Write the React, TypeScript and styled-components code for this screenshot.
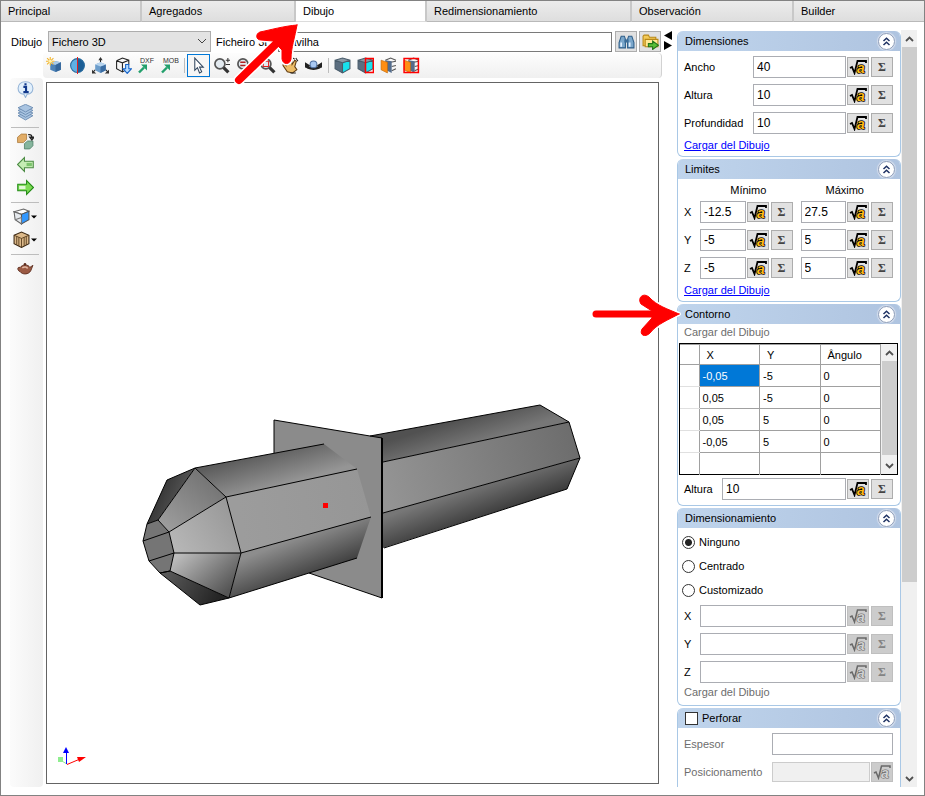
import React from "react";
import styled, { createGlobalStyle, css } from "styled-components";

const GlobalStyle = createGlobalStyle`
  * { box-sizing: border-box; }
  html, body, #root { height: 100%; margin: 0; }
  body { background: #fff; color: #000; }
  body, button, input, select { font-family: "Liberation Sans", Arial, sans-serif; font-size: 11px; }
  svg { display: block; }
`;

/* ---------- frame ---------- */

const Window = styled.div`
  position: relative;
  display: flex;
  flex-direction: column;
  height: 100vh;
  border: 1px solid #828282;
  background: #fff;
  overflow: hidden;
`;

const TabBar = styled.nav`
  display: grid;
  grid-template-columns: 141px 154px 131px 205px 162px 1fr;
  height: 21px;
  flex: none;
`;

const Tab = styled.button<{ $active?: boolean }>`
  padding: 0 7px;
  border: 0;
  border-right: 2px solid #c8c8c8;
  border-bottom: 1px solid ${(p) => (p.$active ? "#dcdcdc" : "#b9b9b9")};
  background: ${(p) => (p.$active ? "#fff" : "linear-gradient(#ececec, #dedede)")};
  color: #000;
  text-align: left;
  &:last-child { border-right: 0; }
`;

const Main = styled.main`
  display: grid;
  grid-template-columns: minmax(0, 1fr) 14px 241px;
  flex: 1;
  min-height: 0;
  padding: 8px 7px 8px 0;
`;

const Work = styled.section`
  display: flex;
  flex-direction: column;
  min-width: 0;
`;

/* ---------- drawing picker ---------- */

const PickerRow = styled.div`
  display: flex;
  align-items: center;
  height: 23px;
  flex: none;
  padding-left: 10px;
`;

const PickerLabel = styled.label`
  width: 37px;
`;

const SelectWrap = styled.span`
  position: relative;
  width: 163px;
  margin-right: 5px;
`;

const Select = styled.select`
  appearance: none;
  width: 100%;
  height: 21px;
  padding: 0 20px 0 3px;
  border: 1px solid #adadad;
  border-radius: 0;
  background: #e3e3e3;
  color: #000;
`;

const SelectArrow = styled.svg`
  position: absolute;
  right: 4px;
  top: 7px;
  pointer-events: none;
`;

const FileInput = styled.input`
  flex: 1;
  min-width: 0;
  height: 20px;
  margin: 0 3px 0 6px;
  padding: 0 3px;
  border: 1px solid #7a7a7a;
`;

const FileButton = styled.button`
  display: grid;
  place-items: center;
  width: 22px;
  height: 21px;
  margin-right: 1px;
  padding: 0;
  border: 1px solid #adadad;
  background: #e1e1e1;
  & + & { margin-left: 1px; }
`;

/* ---------- tool bars ---------- */

const Toolbar = styled.div`
  display: flex;
  align-items: center;
  height: 25px;
  flex: none;
  margin-left: 42px;
  border-radius: 4px;
  border-right: 1px solid #d2d2d2;
  background: linear-gradient(#fdfdfd, #f0f0f0);
`;

const ToolButton = styled.button<{ $active?: boolean }>`
  display: grid;
  place-items: center;
  width: 23px;
  height: 23px;
  padding: 0;
  border: 1px solid ${(p) => (p.$active ? "#0078d7" : "transparent")};
  background: ${(p) => (p.$active ? "#f6f6f6" : "transparent")};
`;

const Separator = styled.span<{ $vertical?: boolean }>`
  flex: none;
  ${(p) =>
    p.$vertical
      ? css`width: 1px; height: 15px; margin: 0 2px 0 3px; background: #bdbdbd;`
      : css`width: 28px; height: 1px; margin: 3px 0 2px; background: #bdbdbd;`}
`;

const Stage = styled.div`
  display: flex;
  flex: 1;
  min-height: 0;
`;

const Rail = styled.div`
  display: flex;
  flex-direction: column;
  align-items: center;
  width: 33px;
  margin-left: 9px;
  padding-right: 3px;
  border-radius: 4px;
  background: linear-gradient(90deg, #fbfbfb, #f0f0f0);
`;

const RailButton = styled(ToolButton)<{ $menu?: boolean }>`
  flex: none;
  ${(p) =>
    p.$menu &&
    css`
      display: flex;
      align-items: center;
      justify-content: center;
      width: 30px;
      gap: 1px;
    `}
`;

const Viewport = styled.div`
  flex: 1;
  min-width: 0;
  margin: 4px 3px 3px;
  border: 1px solid #646464;
  background: #fff;
  svg { width: 100%; height: 100%; }
`;

const Collapsers = styled.div`
  display: flex;
  flex-direction: column;
  align-items: center;
  gap: 1px;
  padding: 1px 1px 0 0;
`;

const CollapseButton = styled.button`
  width: 9px;
  height: 9px;
  padding: 0;
  border: 0;
  background: none;
`;

/* ---------- property panels ---------- */

const Side = styled.aside`
  display: flex;
  min-height: 0;
`;

const Panels = styled.div`
  flex: 1;
  min-width: 0;
  padding: 1px 0 0 1px;
  overflow: hidden;
`;

const Panel = styled.section`
  margin-bottom: 2px;
  border: 1px solid #a9c8e6;
  border-top: 0;
  border-radius: 6px;
  overflow: hidden;
`;

const PanelHead = styled.header`
  display: flex;
  align-items: center;
  justify-content: space-between;
  height: 20px;
  padding: 0 5px 0 7px;
  background: linear-gradient(90deg, #bfd4ec, #afc4e0);
`;

const PanelTitle = styled.h2`
  margin: 0;
  font-size: 11px;
  font-weight: 400;
`;

const RoundButton = styled.button`
  display: grid;
  place-items: center;
  width: 17px;
  height: 17px;
  padding: 0;
  border: 1px solid #8c9cb8;
  border-radius: 50%;
  background: #fff;
  box-shadow: 0 0 1px 1px #d8e0ee;
`;

const PanelBody = styled.div`
  display: flex;
  flex-direction: column;
  gap: 6px;
  padding: 5px 7px 5px 6px;
`;

const FieldRow = styled.div`
  display: flex;
  align-items: center;
  height: 22px;
`;

const FieldLabel = styled.label<{ $w: number; $dim?: boolean }>`
  flex: none;
  width: ${(p) => p.$w}px;
  color: ${(p) => (p.$dim ? "#6d6d6d" : "#000")};
`;

const FieldInput = styled.input`
  flex: 1;
  min-width: 0;
  width: 0;
  height: 22px;
  padding: 0 3px;
  border: 1px solid #abadb3;
  background: #fff;
  color: #000;
  font-size: 12px;
  &:disabled { height: 20px; border-color: #cccccc; background: #f0f0f0; }
`;

const MiniButton = styled.button`
  display: grid;
  place-items: center;
  flex: none;
  width: 22px;
  height: 20px;
  margin-left: 1px;
  padding: 0;
  border: 1px solid #adadad;
  background: #e1e1e1;
  color: #444;
  font: bold 12px "Liberation Serif", serif;
  & + & { margin-left: 2px; }
  &:disabled { border-color: #bfbfbf; background: #cccccc; color: #838383; }
`;

const PairGap = styled.span`
  flex: none;
  width: 8px;
`;

const AxisHeads = styled.div`
  display: grid;
  grid-template-columns: 1fr 1fr;
  padding-left: 16px;
  height: 11px;
  line-height: 13px;
  text-align: center;
`;

const linkStyle = css`
  align-self: flex-start;
  height: 12px;
  margin-top: -1px;
  line-height: 12px;
`;

const Link = styled.a`
  ${linkStyle}
  color: #0000ff;
`;

const LinkButton = styled.button`
  ${linkStyle}
  margin-top: -3px;
  margin-bottom: -1px;
  padding: 0;
  border: 0;
  background: none;
  &:last-child { margin-bottom: 2px; }
  &:disabled { color: #6d6d6d; }
`;

const Option = styled.label`
  display: flex;
  align-items: center;
  gap: 4px;
  height: 18px;
`;

const Radio = styled.input`
  appearance: none;
  width: 13px;
  height: 13px;
  margin: 0 0 0 -2px;
  border: 1px solid #333;
  border-radius: 50%;
  background: #fff;
  &:checked { background: radial-gradient(circle, #222 0 3px, #fff 4px); }
`;

const Check = styled.input`
  appearance: none;
  width: 13px;
  height: 13px;
  margin: 0;
  border: 1px solid #333;
  background: #fff;
`;

const CheckTitle = styled.label`
  display: flex;
  align-items: center;
  gap: 4px;
`;

const GridFrame = styled.div`
  display: flex;
  height: 132px;
  margin: 0 -5px -3px;
  border: 1px solid #000;
`;

const Grid = styled.table`
  flex: 1;
  width: 100%;
  table-layout: fixed;
  border-collapse: collapse;
  border-top: 1px solid #a0a0a0;
  th, td {
    height: 22px;
    padding: 0 3px;
    border: 1px solid #a0a0a0;
    border-top: 0;
    text-align: left;
    font-weight: 400;
    font-size: 11px;
  }
  thead th { height: 20px; padding-left: 7px; }
  th:first-child { width: 19px; border-left: 0; }
  tbody th { border-bottom-color: #e0e0e0; }
  tbody tr:last-child > * { border-bottom: 0; }
`;

const Cell = styled.td<{ $selected?: boolean }>`
  ${(p) => p.$selected && css`background: #0078d7; color: #fff;`}
`;

/* ---------- scroll bars ---------- */

const ScrollTrack = styled.div`
  display: flex;
  flex-direction: column;
  flex: none;
  width: 16px;
  background: #f0f0f0;
`;

const ScrollButton = styled.button`
  display: grid;
  place-items: center;
  flex: none;
  height: 17px;
  width: 16px;
  padding: 0;
  border: 0;
  background: #f0f0f0;
`;

const ScrollArea = styled.div`
  flex: 1;
`;

const Thumb = styled.div<{ $size: string }>`
  height: ${(p) => p.$size};
  margin-left: 1px;
  background: #cdcdcd;
`;

const Annotations = styled.svg`
  position: absolute;
  left: 0;
  top: 0;
  pointer-events: none;
`;

/* ---------- icons ---------- */

const Chevron = ({ down }: { down?: boolean }) => (
  <svg width="9" height="6" viewBox="0 0 9 6">
    <path d={down ? "M1 1L4.5 4.5L8 1" : "M1 5L4.5 1.5L8 5"} fill="none" stroke="#505050" strokeWidth="1.8" />
  </svg>
);

const DoubleChevron = () => (
  <svg width="9" height="9" viewBox="0 0 9 9">
    <path d="M1.5 4L4.5 1.2L7.5 4M1.5 8L4.5 5.2L7.5 8" fill="none" stroke="#1f3263" strokeWidth="1.5" />
  </svg>
);

const FormulaIcon = ({ off }: { off?: boolean }) => (
  <svg width="18" height="16" viewBox="0 0 18 16">
    <path d="M1 9L3 8L5.5 14L8.5 2H17V4" fill="none" stroke={off ? "#686868" : "#000"} strokeWidth={off ? 1.5 : 1.8} />
    <text x="8" y="14" fontFamily="Liberation Sans" fontSize="14" fontWeight="700" fontStyle="italic"
      fill={off ? "#d0d0d0" : "#ffb914"} stroke={off ? "#686868" : "#000"} strokeWidth={off ? 1.2 : 1.6}
      strokeLinejoin="round" paintOrder="stroke">a</text>
  </svg>
);

const I = ({ children }: { children: React.ReactNode }) => (
  <svg width="17" height="17" viewBox="0 0 16 16">{children}</svg>
);

const BoxNewIcon = () => (
  <I>
    <path d="M4 6L9 4L14 5V12L9 14L4 12Z" fill="#4e83b8" />
    <path d="M4 6L9 4L14 5L9 7.5Z" fill="#a9cbea" />
    <path d="M9 7.5L14 5V12L9 14Z" fill="#34669b" />
    <path d="M4 0V8M0 4H8M1 1L7 7M7 1L1 7" stroke="#f2b42a" />
    <circle cx="4" cy="4" r="1.5" fill="#fff3b0" />
  </I>
);
const SphereIcon = () => (
  <I>
    <circle cx="8" cy="8" r="6.5" fill="#5fb0e4" />
    <path d="M8 1.5A6.5 6.5 0 0 1 8 14.5Z" fill="#1b5e96" />
    <circle cx="8" cy="8" r="6.5" fill="none" stroke="#2a6b9d" />
    <path d="M8 0V16" stroke="#e02020" />
  </I>
);
const AxesBoxIcon = () => (
  <I>
    <path d="M8 5V1M3 12L0.5 15M13 12L15.5 15" stroke="#222" />
    <path d="M6 3L8 0L10 3ZM0 12V15.5H4ZM16 12V15.5H12Z" fill="#333" />
    <path d="M3 7L8 5L13 7V12.5L8 15L3 12.5Z" fill="#6c9dcb" />
    <path d="M8 9L13 7V12.5L8 15Z" fill="#3a6da3" />
    <path d="M3 7L8 5L13 7L8 9Z" fill="#b7d4ee" />
  </I>
);
const ImportBoxIcon = () => (
  <I>
    <path d="M1.5 3.5L7 1L13 3V7M1.5 3.5L7 5.5L13 3M1.5 3.5V11L7 14V5.5M7 14L9 13" fill="none" stroke="#222" />
    <path d="M10 7H13V11H15.5L11.5 15.5L7.5 11H10Z" fill="#b7dcff" stroke="#1764c8" />
  </I>
);
const TagArrowIcon = ({ tag }: { tag: string }) => (
  <svg width="19" height="17" viewBox="0 0 19 17">
    <path d="M2 15.5L7 10.5" fill="none" stroke="#23a06c" strokeWidth="2.4" />
    <path d="M4 7.5H10V13.5Z" fill="#23a06c" />
    <text x="3" y="6" fontFamily="Liberation Sans" fontSize="7" fill="#333">{tag}</text>
  </svg>
);
const CursorIcon = () => (
  <I><path d="M4.5 1V12.5L7 10L9 15L11 14L9 9.5H12.5Z" fill="#fff" stroke="#33475f" /></I>
);
const ZoomIcon = ({ kind }: { kind: "pm" | "fit" | "sel" }) => (
  <I>
    <circle cx="6.5" cy="6.5" r="4.7" fill="#e3eaf0" stroke="#555" strokeWidth="1.6" />
    <path d="M10 10L14.5 14.5" stroke="#333" strokeWidth="3" />
    {kind === "pm" && <path d="M12 3H16M14 1V5M12 7H16" stroke="#333" />}
    {kind === "fit" && <path d="M4 5H9M4 8H9" stroke="#b02020" strokeWidth="1.4" />}
    {kind === "sel" && <path d="M4 4H9V9H4Z" fill="none" stroke="#e02020" />}
  </I>
);
const HandIcon = () => (
  <I>
    <path d="M1 6L4 8L3 3L5 3L7 7L7 2L9 2L9.5 7L12 3L13.5 4L12 9L14 12L10 15L5 14L1 8Z" fill="#edbd68" stroke="#5f3b11" />
    <path d="M10 1L12 2M13 1L15 4M8 15H13" stroke="#222" />
  </I>
);
const OrbitIcon = () => (
  <I>
    <path d="M1 7C1 12 15 12 15 7" fill="none" stroke="#222" strokeWidth="3" />
    <circle cx="8" cy="7" r="3.2" fill="#a8c8f2" stroke="#4e6f9f" />
    <path d="M0 5V10L5 8ZM16 5V10L11 8Z" fill="#222" />
  </I>
);
const CubeIcon = ({ marked }: { marked?: boolean }) => (
  <I>
    <path d="M1 3L8 1L15 3L8 5.5Z" fill="#8c9aa6" />
    <path d="M1 3L8 5.5V15L1 11Z" fill="#5b6e80" />
    <path d="M8 5.5L15 3V11L8 15Z" fill="#17e1ed" />
    <path d="M1 3L8 1L15 3V11L8 15L1 11ZM1 3L8 5.5L15 3M8 5.5V15" fill="none" stroke="#495c6b" />
    {marked && <path d="M8 1.5H15.5V14.5H8Z" fill="none" stroke="#f00" strokeWidth="1.4" />}
  </I>
);
const CutCubeIcon = ({ marked }: { marked?: boolean }) => (
  <I>
    <path d="M5 3L10 1L15 3M10 5L15 4M11 9L15 8M11 13L15 11" fill="none" stroke="#555" />
    <path d="M5 3L11 4V15L5 12Z" fill="#536c8c" />
    <path d="M1 3L7 5V15L1 12Z" fill="#ff8e12" stroke="#c06a0a" strokeWidth="0.6" />
    {marked && <path d="M1 1.5H14.5V14.5H1Z" fill="none" stroke="#f00" strokeWidth="1.4" />}
  </I>
);
const BinocularsIcon = () => (
  <I>
    <path d="M3 3H6L7 6V14H1V9ZM10 3H13L15 9V14H9V6Z" fill="#7ba7cb" stroke="#2f5f8a" />
    <path d="M6 6H10V9H6Z" fill="#3c6d98" />
    <path d="M3 9V13M11 9V13" stroke="#e3f1ff" strokeWidth="1.6" />
  </I>
);
const FolderIcon = () => (
  <I>
    <path d="M1 3V12H13V4H7L6 2H2Z" fill="#f4ca57" stroke="#b98816" />
    <path d="M3 6H15V13H3Z" fill="#ffe995" stroke="#b98816" />
    <path d="M6 10H10V7.5L15.5 11.5L10 15.5V13H6Z" fill="#58bf37" stroke="#23751a" />
  </I>
);
const InfoIcon = () => (
  <I>
    <path d="M8 0.7C17 0.7 17 12.5 9.5 12.5L8 15.5L6.5 12.5C-1 12.5-1 0.7 8 0.7Z" fill="#e2f0fc" stroke="#94b3d6" />
    <path d="M8 2V4M6 5.5H8.5V10M6 10.5H11" fill="none" stroke="#12398c" strokeWidth="2" />
  </I>
);
const LayersIcon = () => (
  <I>
    {[11, 8.5, 6, 3.5].map((y) => (
      <path key={y} d={`M1 ${y}L8 ${y - 3.2}L15 ${y}L8 ${y + 4}Z`} fill="#a9c4e1" stroke="#6587ad" strokeWidth="0.8" />
    ))}
  </I>
);
const SwapIcon = () => (
  <I>
    <path d="M0.5 4L4 1H9V6L6 9H0.5Z" fill="#e2ad67" stroke="#a97535" strokeWidth="0.7" />
    <path d="M7 10L10 7.5H15V12L12 15H7Z" fill="#86b59d" stroke="#497b62" strokeWidth="0.7" />
    <path d="M10.5 1.5C14 1 14 3 14 5M12 4H16L14 6.5Z" fill="none" stroke="#222" strokeWidth="1.2" />
  </I>
);
const GreenArrow = ({ right }: { right?: boolean }) => (
  <I>
    <path
      d={right ? "M0.7 5H9V1.5L15.5 8L9 14.5V11H0.7Z" : "M15.3 5H7V1.5L0.5 8L7 14.5V11H15.3Z"}
      fill={right ? "#7ddb55" : "#c5edb4"} stroke={right ? "#238b16" : "#4a8b42"}
    />
    <path d={right ? "M2 6.5H8V9.5H2Z" : "M9 6.5H14V9.5H9Z"} fill={right ? "#e2f7d8" : "#7bc36b"} />
  </I>
);
const ViewCubeIcon = () => (
  <I>
    <path d="M1 3.5L10 1L15 3L8 6Z" fill="#fff" stroke="#666" />
    <path d="M1 3.5L8 6V15L2 11Z" fill="#e5e9ed" stroke="#666" />
    <path d="M8 6L15 3V11L8 15Z" fill="#3298ff" stroke="#555" />
    <path d="M2 11L8 9L8 15" fill="none" stroke="#777" />
  </I>
);
const CrateIcon = () => (
  <I>
    <path d="M1 4L8 1L15 4V12L8 15.5L1 12Z" fill="#dcb98a" stroke="#3b2813" />
    <path d="M1 4L8 7L15 4M8 7V15M3.5 5V13M5.5 6V14M10.5 6V14M12.5 5V13" fill="none" stroke="#513719" strokeWidth="0.8" />
  </I>
);
const TeapotIcon = () => (
  <I>
    <path d="M3 7C5 4 11 4 12 7L15 5L13 10C11 14 5 14 3 11C0 10 0 6 3 7Z" fill="#9b5a43" stroke="#5b2c1d" strokeWidth="0.8" />
    <circle cx="7.5" cy="4" r="1.2" fill="#5b2c1d" />
    <path d="M5 7.5C7 6 9 6.5 10 8" fill="none" stroke="#e3b9a5" strokeWidth="1.5" />
  </I>
);
const MenuCaret = () => (
  <svg width="6" height="4" viewBox="0 0 6 4"><path d="M0 0.5H6L3 3.5Z" fill="#000" /></svg>
);

/* ---------- model drawing ---------- */

const stops: Record<string, [number, number, number, number, string[]]> = {
  frontTop: [255, 455, 265, 490, ["#5d5d5d", "#959595"]],
  frontMid: [240, 520, 370, 500, ["#9c9c9c", "#969696"]],
  frontLow: [290, 540, 305, 578, ["#8d8d8d", "#414141"]],
  backTop: [460, 419, 468, 445, ["#515151", "#777777"]],
  backMid: [384, 490, 580, 440, ["#949494", "#6c6c6c"]],
  backLow: [460, 490, 472, 523, ["#777777", "#3b3b3b"]],
  noseA: [150, 500, 185, 515, ["#303030", "#606060"]],
  noseB: [165, 530, 205, 480, ["#9e9e9e", "#777777"]],
  noseC: [172, 550, 235, 510, ["#b8b8b8", "#989898"]],
  noseD: [180, 553, 220, 598, ["#bdbdbd", "#555555"]],
  noseE: [165, 573, 215, 602, ["#5a5a5a", "#252525"]],
};

const faces: [string, string][] = [
  ["backTop", "370,436 540,405 569,422 383,462"],
  ["backMid", "383,462 569,422 580,458 383,513"],
  ["backLow", "383,513 580,458 567,489 383,548"],
  ["plate", "274,420 382,438 382,598 274,561"],
  ["noseA", "147,524 158,520 195,468 167,480"],
  ["noseB", "158,520 169,532 226,497 195,468"],
  ["noseC", "169,532 174,553 241,553 226,497"],
  ["noseD", "174,553 170,571 229,598 241,553"],
  ["noseE", "170,571 160,573 200,605 229,598"],
  ["frontTop", "195,468 324,444 357,469 226,497"],
  ["frontMid", "226,497 357,469 371,517 241,553"],
  ["frontLow", "241,553 371,517 357,558 229,598"],
];

const edges =
  "M370 436L540 405L569 422L580 458L567 489L384 548M383 462L569 422M383 513L580 458" +
  "M274 453V420L382 438M382 598L309 573" +
  "M195 468L324 444M226 497L357 469M241 553L371 517M229 598L357 558" +
  "M147 524L167 480L195 468L226 497L241 553L229 598L200 605L160 573" +
  "M158 520L195 468M169 532L226 497M174 553H241M170 571L229 598" +
  "M147 524L158 520L169 532L174 553L170 571L160 573L149 561L143 541ZM143 541L169 532M149 561L174 553M160 573L170 571";

const Model = () => (
  <svg viewBox="47 83 611 700" role="img" aria-label="Cavilha">
    <defs>
      {Object.entries(stops).map(([id, [x1, y1, x2, y2, colors]]) => (
        <linearGradient key={id} id={id} gradientUnits="userSpaceOnUse" x1={x1} y1={y1} x2={x2} y2={y2}>
          <stop offset="0" stopColor={colors[0]} />
          <stop offset="1" stopColor={colors[1]} />
        </linearGradient>
      ))}
    </defs>
    {faces.map(([id, points]) => (
      <polygon key={id} points={points} fill={id === "plate" ? "#8b8b8b" : `url(#${id})`} />
    ))}
    <polygon points="147,524 158,520 169,532 174,553 170,571 160,573 149,561 143,541" fill="#757575" />
    <path d={edges} fill="none" stroke="#000" />
    <path d="M382 438V598" stroke="#000" strokeWidth="2" />
    <rect x="323" y="503" width="5" height="5" fill="#f00" />
    <path d="M67 764L60 760" stroke="#8fee8f" />
    <rect x="58" y="757" width="5" height="5" fill="#8fee8f" />
    <path d="M66.5 764V750" stroke="#00f" />
    <path d="M63 753L66 747L69 753Z" fill="#00f" />
    <path d="M67 764.5L80 759" stroke="#f00" />
    <path d="M77 757H86L79 762Z" fill="#f00" />
  </svg>
);

/* ---------- composed parts ---------- */

type FieldProps = { id: string; name: string; value?: string; off?: boolean };

const Field = ({ id, name, value = "", off }: FieldProps) => (
  <>
    <FieldInput id={id} aria-label={name} defaultValue={value} />
    <MiniButton aria-label={`Fórmula ${name}`} disabled={off}><FormulaIcon off={off} /></MiniButton>
    <MiniButton aria-label={`Suma ${name}`} disabled={off}>Σ</MiniButton>
  </>
);

const Group = ({ title, children }: { title: React.ReactNode; children: React.ReactNode }) => (
  <Panel>
    <PanelHead>
      <PanelTitle>{title}</PanelTitle>
      <RoundButton aria-label="Contraer"><DoubleChevron /></RoundButton>
    </PanelHead>
    <PanelBody>{children}</PanelBody>
  </Panel>
);

const Scrollbar = ({ size }: { size: string }) => (
  <ScrollTrack>
    <ScrollButton aria-label="Subir"><Chevron /></ScrollButton>
    <ScrollArea><Thumb $size={size} /></ScrollArea>
    <ScrollButton aria-label="Bajar"><Chevron down /></ScrollButton>
  </ScrollTrack>
);

const tabs = ["Principal", "Agregados", "Dibujo", "Redimensionamiento", "Observación", "Builder"];
const dimensions = [["Ancho", "40"], ["Altura", "10"], ["Profundidad", "10"]];
const limits = [["X", "-12.5", "27.5"], ["Y", "-5", "5"], ["Z", "-5", "5"]];
const contour = [["-0,05", "-5", "0"], ["0,05", "-5", "0"], ["0,05", "5", "0"], ["-0,05", "5", "0"], ["", "", ""]];

const upperHead =
  "M297 25C284 26 270 30 260 32C255 34 256 40 261 40L273 41L282 50V59C283 65 290 65 291 59C291 48 295 37 297 25Z";
const sideHead =
  "M679 314C668 309 657 306 649 297C643 292 637 298 641 304L652 311V318L642 329C639 335 645 338 650 333C657 324 668 320 679 314Z";

export default function App() {
  return (
    <Window>
      <GlobalStyle />
      <TabBar>
        {tabs.map((t) => <Tab key={t} $active={t === "Dibujo"}>{t}</Tab>)}
      </TabBar>
      <Main>
        <Work>
          <PickerRow>
            <PickerLabel htmlFor="kind">Dibujo</PickerLabel>
            <SelectWrap>
              <Select id="kind"><option>Fichero 3D</option></Select>
              <SelectArrow width="10" height="7" viewBox="0 0 10 7">
                <path d="M1 1L5 5L9 1" fill="none" stroke="#444" />
              </SelectArrow>
            </SelectWrap>
            <label htmlFor="file">Ficheiro 3D</label>
            <FileInput id="file" defaultValue="Cavilha" />
            <FileButton aria-label="Buscar"><BinocularsIcon /></FileButton>
            <FileButton aria-label="Abrir"><FolderIcon /></FileButton>
          </PickerRow>
          <Toolbar>
            <ToolButton aria-label="Nueva caja"><BoxNewIcon /></ToolButton>
            <ToolButton aria-label="Esfera"><SphereIcon /></ToolButton>
            <ToolButton aria-label="Ejes"><AxesBoxIcon /></ToolButton>
            <ToolButton aria-label="Importar"><ImportBoxIcon /></ToolButton>
            <ToolButton aria-label="Exportar DXF"><TagArrowIcon tag="DXF" /></ToolButton>
            <ToolButton aria-label="Exportar MOB"><TagArrowIcon tag="MOB" /></ToolButton>
            <Separator $vertical />
            <ToolButton aria-label="Seleccionar" $active><CursorIcon /></ToolButton>
            <ToolButton aria-label="Zoom"><ZoomIcon kind="pm" /></ToolButton>
            <ToolButton aria-label="Zoom total"><ZoomIcon kind="fit" /></ToolButton>
            <ToolButton aria-label="Zoom ventana"><ZoomIcon kind="sel" /></ToolButton>
            <ToolButton aria-label="Mover"><HandIcon /></ToolButton>
            <ToolButton aria-label="Orbitar"><OrbitIcon /></ToolButton>
            <Separator $vertical />
            <ToolButton aria-label="Cubo"><CubeIcon /></ToolButton>
            <ToolButton aria-label="Cara"><CubeIcon marked /></ToolButton>
            <ToolButton aria-label="Corte"><CutCubeIcon /></ToolButton>
            <ToolButton aria-label="Corte marcado"><CutCubeIcon marked /></ToolButton>
          </Toolbar>
          <Stage>
            <Rail>
              <RailButton aria-label="Información"><InfoIcon /></RailButton>
              <RailButton aria-label="Capas"><LayersIcon /></RailButton>
              <Separator />
              <RailButton aria-label="Cambiar"><SwapIcon /></RailButton>
              <RailButton aria-label="Anterior"><GreenArrow /></RailButton>
              <RailButton aria-label="Siguiente"><GreenArrow right /></RailButton>
              <Separator />
              <RailButton aria-label="Vista" $menu><ViewCubeIcon /><MenuCaret /></RailButton>
              <RailButton aria-label="Material" $menu><CrateIcon /><MenuCaret /></RailButton>
              <Separator />
              <RailButton aria-label="Render"><TeapotIcon /></RailButton>
            </Rail>
            <Viewport><Model /></Viewport>
          </Stage>
        </Work>

        <Collapsers>
          <CollapseButton aria-label="Expandir">
            <svg width="9" height="9"><path d="M8 0V9L0 4.5Z" /></svg>
          </CollapseButton>
          <CollapseButton aria-label="Ocultar">
            <svg width="9" height="9"><path d="M0 0V9L8 4.5Z" /></svg>
          </CollapseButton>
        </Collapsers>

        <Side>
          <Panels>
            <Group title="Dimensiones">
              {dimensions.map(([name, value]) => (
                <FieldRow key={name}>
                  <FieldLabel $w={69} htmlFor={`dim-${name}`}>{name}</FieldLabel>
                  <Field id={`dim-${name}`} name={name} value={value} />
                </FieldRow>
              ))}
              <Link href="#">Cargar del Dibujo</Link>
            </Group>

            <Group title="Limites">
              <AxisHeads><span>Mínimo</span><span>Máximo</span></AxisHeads>
              {limits.map(([axis, min, max]) => (
                <FieldRow key={axis}>
                  <FieldLabel $w={16} htmlFor={`min-${axis}`}>{axis}</FieldLabel>
                  <Field id={`min-${axis}`} name={`${axis} mínimo`} value={min} />
                  <PairGap />
                  <Field id={`max-${axis}`} name={`${axis} máximo`} value={max} />
                </FieldRow>
              ))}
              <Link href="#">Cargar del Dibujo</Link>
            </Group>

            <Group title="Contorno">
              <LinkButton disabled>Cargar del Dibujo</LinkButton>
              <GridFrame>
                <Grid>
                  <thead>
                    <tr><th /><th>X</th><th>Y</th><th>Ângulo</th></tr>
                  </thead>
                  <tbody>
                    {contour.map((row, r) => (
                      <tr key={r}>
                        <th />
                        {row.map((v, c) => <Cell key={c} $selected={r === 0 && c === 0}>{v}</Cell>)}
                      </tr>
                    ))}
                  </tbody>
                </Grid>
                <Scrollbar size="98%" />
              </GridFrame>
              <FieldRow>
                <FieldLabel $w={38} htmlFor="contour-height">Altura</FieldLabel>
                <Field id="contour-height" name="Altura" value="10" />
              </FieldRow>
            </Group>

            <Group title="Dimensionamiento">
              {["Ninguno", "Centrado", "Customizado"].map((o) => (
                <Option key={o}>
                  <Radio type="radio" name="sizing" defaultChecked={o === "Ninguno"} />
                  {o}
                </Option>
              ))}
              {["X", "Y", "Z"].map((axis) => (
                <FieldRow key={axis}>
                  <FieldLabel $w={16} htmlFor={`size-${axis}`}>{axis}</FieldLabel>
                  <Field id={`size-${axis}`} name={axis} off />
                </FieldRow>
              ))}
              <LinkButton disabled>Cargar del Dibujo</LinkButton>
            </Group>

            <Group title={<CheckTitle><Check type="checkbox" />Perforar</CheckTitle>}>
              <FieldRow>
                <FieldLabel $w={88} $dim htmlFor="thickness">Espesor</FieldLabel>
                <FieldInput id="thickness" />
              </FieldRow>
              <FieldRow>
                <FieldLabel $w={88} $dim htmlFor="position">Posicionamento</FieldLabel>
                <FieldInput id="position" disabled />
                <MiniButton aria-label="Fórmula" disabled><FormulaIcon off /></MiniButton>
              </FieldRow>
              <FieldRow />
            </Group>
          </Panels>
          <Scrollbar size="74%" />
        </Side>
      </Main>
      <Annotations width="700" height="340" viewBox="1 1 700 340">
        <g fill="none" stroke="#fff" strokeWidth="11" strokeLinecap="round" strokeLinejoin="round">
          <path d="M239 80L278 42M596 314H650" />
          <path d={upperHead} strokeWidth="4" />
          <path d={sideHead} strokeWidth="4" />
        </g>
        <g fill="#f00" stroke="#f00" strokeLinecap="round" strokeLinejoin="round">
          <path d="M239 80L282 38" strokeWidth="8" />
          <path d="M596 314H655" strokeWidth="7" />
          <path d={upperHead} strokeWidth="1" />
          <path d={sideHead} strokeWidth="1" />
        </g>
      </Annotations>
    </Window>
  );
}
